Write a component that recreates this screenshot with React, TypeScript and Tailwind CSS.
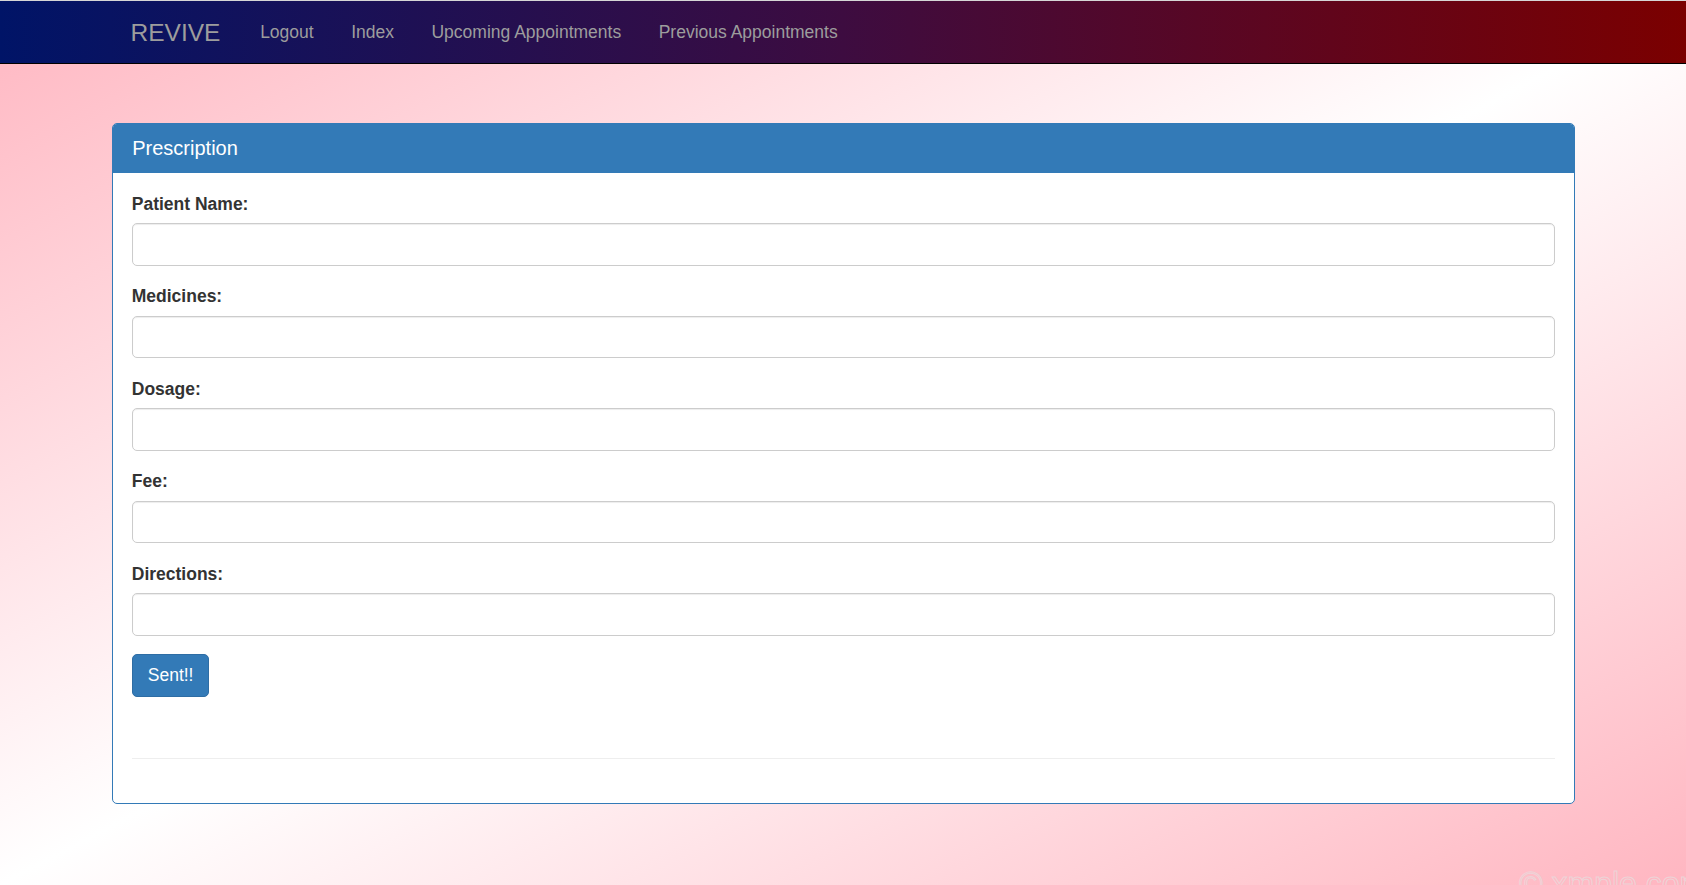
import React from 'react';

const fields = ['Patient Name:', 'Medicines:', 'Dosage:', 'Fee:', 'Directions:'];

const navLinks = ['Logout', 'Index', 'Upcoming Appointments', 'Previous Appointments'];

export default function App() {
  return (
    <div
      className="relative min-h-screen overflow-hidden bg-[linear-gradient(to_bottom_right,#ffb6c1,#ffffff,#ffb6c1)] text-[#333] text-[17.5px] leading-[25px]"
      style={{ fontFamily: '"Liberation Sans", Arial, sans-serif' }}
    >
      {/* Navbar */}
      <nav className="h-[64px] border-t border-b border-t-[#d6d6d6] border-b-black bg-[linear-gradient(to_right,#001467,#3d0c40,#7b0000)]">
        <div className="mx-auto flex h-full w-[1462.5px] items-center px-[18.75px]">
          <a className="mr-[21px] text-[24.5px] leading-[25px] text-[#9d9d9d]">REVIVE</a>
          <ul className="flex">
            {navLinks.map((link) => (
              <li key={link}>
                <a className="block px-[18.75px] text-[17.5px] leading-[25px] text-[#9d9d9d]">{link}</a>
              </li>
            ))}
          </ul>
        </div>
      </nav>

      {/* Prescription panel */}
      <div className="mx-auto mt-[59px] w-[1463px] rounded-[5px] border border-[#337ab7] bg-white">
        <div className="flex h-[49px] items-center rounded-t-[4px] bg-[#337ab7] pr-[18.75px] pl-[19.75px] text-[20px] text-white">
          Prescription
        </div>
        <div className="pt-[18.75px] pr-[18.75px] pb-[18.75px] pl-[19.25px]">
          <form onSubmit={(e) => e.preventDefault()}>
            {fields.map((label) => (
              <div key={label} className="mb-[18.75px]">
                <label className="mb-[7.25px] block leading-[24px] font-bold">{label}</label>
                <input
                  type="text"
                  className="block h-[42.5px] w-full rounded-[5px] border border-[#ccc] bg-white px-[15px] shadow-[inset_0_1px_1px_rgba(0,0,0,0.075)] outline-none"
                />
              </div>
            ))}
            <button
              type="submit"
              className="h-[42.5px] rounded-[5px] border border-[#2e6da4] bg-[#337ab7] px-[15px] text-[17.5px] leading-[25px] text-white"
            >
              Sent!!
            </button>
          </form>
          <hr className="mt-[61.5px] mb-[25px] border-t border-[#eee]" />
        </div>
      </div>

      {/* Watermark */}
      <div className="pointer-events-none absolute top-[867px] left-[1519px] whitespace-nowrap text-[32px] leading-none text-transparent [-webkit-text-stroke:1px_rgba(235,215,218,0.9)]">
        © xmple.com
      </div>
    </div>
  );
}
